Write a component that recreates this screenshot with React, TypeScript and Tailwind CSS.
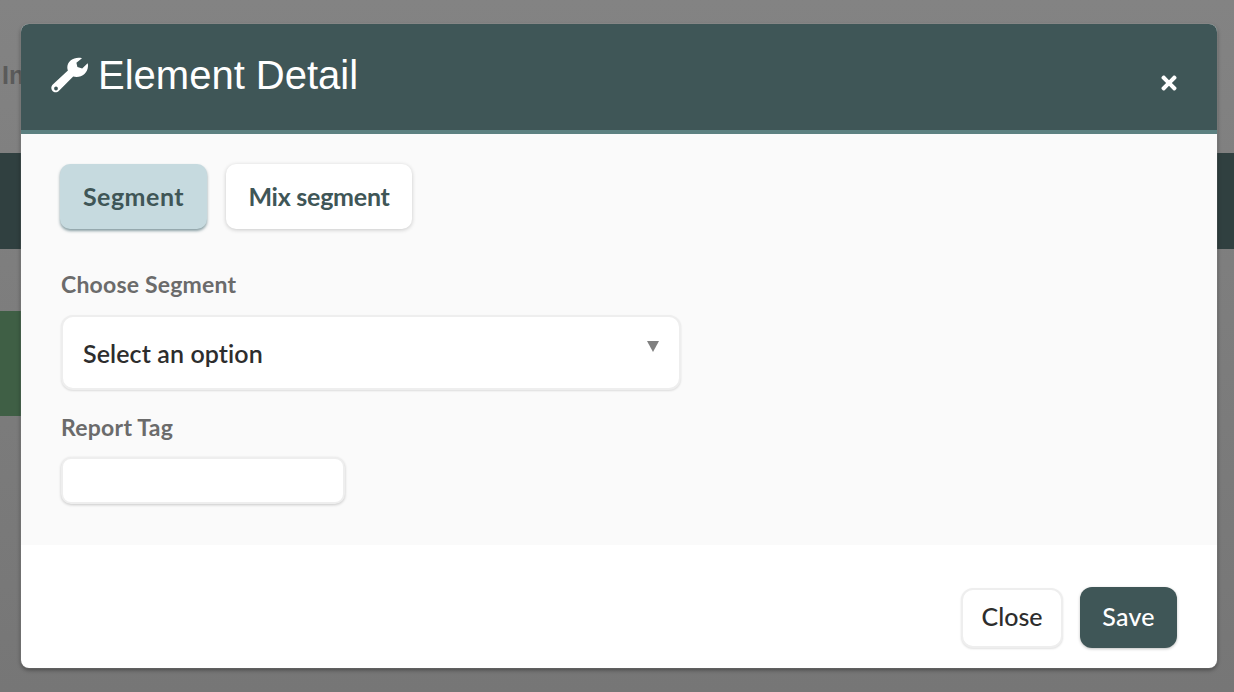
import { FaTimes } from "react-icons/fa";

const cabin = "font-['Lato',sans-serif]";

function WrenchIcon() {
  return (
    <svg viewBox="0 0 37 37" className="h-[37px] w-[37px]" fill="currentColor">
      <path
        fillRule="evenodd"
        d="M31 1.2C24 -0.6 16.6 3.4 16.3 10.2C16.3 11.6 16.5 12.6 16.9 13.6L1.8 27.6C-0.2 29.6 -0.1 32.2 1.5 33.9C3.3 35.8 6 35.7 8 33.7L22.2 19.6C30 21.6 37.2 16.2 37 8.4C37 7.6 36.9 7 36.6 6.2L31.2 11.4L26.4 10L25.4 5.8ZM5 29.6A1.9 1.9 0 1 0 5 33.4A1.9 1.9 0 1 0 5 29.6Z"
      />
    </svg>
  );
}

function Tab({ label, active }: { label: string; active?: boolean }) {
  return (
    <button
      className={
        active
          ? "h-[65px] w-[147px] rounded-[10px] bg-[#c6dadf] text-[25px] font-bold tracking-[0.5px] text-[#3f5657] shadow-[0_2px_3px_rgba(40,80,90,0.55)]"
          : "h-[65px] w-[186px] rounded-[10px] bg-white text-[25px] font-bold tracking-[-0.25px] text-[#3f5657] shadow-[0_1px_4px_rgba(0,0,0,0.2)]"
      }
    >
      {label}
    </button>
  );
}

export default function App() {
  return (
    <div className={`relative h-[692px] w-[1234px] overflow-hidden bg-gradient-to-b from-[#838383] to-[#767676] ${cabin}`}>
      {/* page behind the backdrop */}
      <div className="flex flex-col">
        <div className="flex h-[153px] items-center pb-[1px] pl-[2px] text-[25px] font-bold font-['Liberation_Sans',sans-serif] text-[#5a5a5a]">
          In
        </div>
        <div className="h-[96px] bg-[#304040]" />
        <div className="mt-[62px] h-[105px] w-[100px] bg-[#3f5f45]" />
      </div>

      <div className="absolute left-[21px] top-[24px] flex h-[644px] w-[1196px] flex-col overflow-hidden rounded-[8px] bg-white shadow-[0_0_0_1px_rgba(255,255,255,0.08),0_2px_4px_rgba(0,0,0,0.4)]">
        <div className="flex h-[110px] shrink-0 items-start justify-between border-b-4 border-[#5c8080] bg-[#3f5657] pl-[30px] pr-[40px] text-white">
          <div className="mt-[28px] flex items-center gap-[10px]">
            <WrenchIcon />
            <h1 className="font-['Liberation_Sans',sans-serif] text-[40px] leading-[46px]">Element Detail</h1>
          </div>
          <FaTimes className="mt-[48px] h-[22px] w-[16px]" />
        </div>

        <div className="flex h-[411px] flex-col bg-[#fafafa] pl-[40px] pt-[30px]">
          <div className="-ml-px flex gap-[19px]">
            <Tab label="Segment" active />
            <Tab label="Mix segment" />
          </div>
          <label className="mt-[40px] text-[23px] leading-[30px] font-bold tracking-[0.2px] text-[#6b6b6b]">
            Choose Segment
          </label>
          <div className="relative mt-[16px] flex h-[75px] w-[620px] items-center rounded-[12px] border-2 border-[#eeeeee] bg-white pl-[20px] pt-[2px] text-[25px] font-semibold tracking-[0.1px] text-[#2d2d2d] shadow-[0_1px_2px_rgba(0,0,0,0.12)]">
            Select an option
            <span className="absolute right-[20px] top-[24px] h-0 w-0 border-x-[6px] border-t-[11px] border-x-transparent border-t-[#808080]" />
          </div>
          <label className="mt-[22px] text-[23px] leading-[30px] font-bold tracking-[0.25px] text-[#6b6b6b]">
            Report Tag
          </label>
          <input className="mt-[15px] h-[47px] w-[284px] rounded-[10px] border-2 border-[#eeeeee] bg-white shadow-[0_1px_3px_rgba(0,0,0,0.2)] outline-none" />
        </div>

        <div className="flex flex-1 items-start justify-end gap-[17px] pr-[40px] pt-[42px]">
          <button className="mt-[1px] h-[60px] w-[102px] rounded-[12px] border-2 border-[#eeeeee] bg-white pb-[2px] text-[25px] font-medium text-[#2d2d2d] shadow-[0_1px_2px_rgba(0,0,0,0.12)]">
            Close
          </button>
          <button className="h-[61px] w-[97px] rounded-[12px] bg-[#3f5657] pb-[2px] text-[25px] font-medium tracking-[0.2px] text-white shadow-[0_1px_3px_rgba(0,0,0,0.25)]">
            Save
          </button>
        </div>
      </div>
    </div>
  );
}
